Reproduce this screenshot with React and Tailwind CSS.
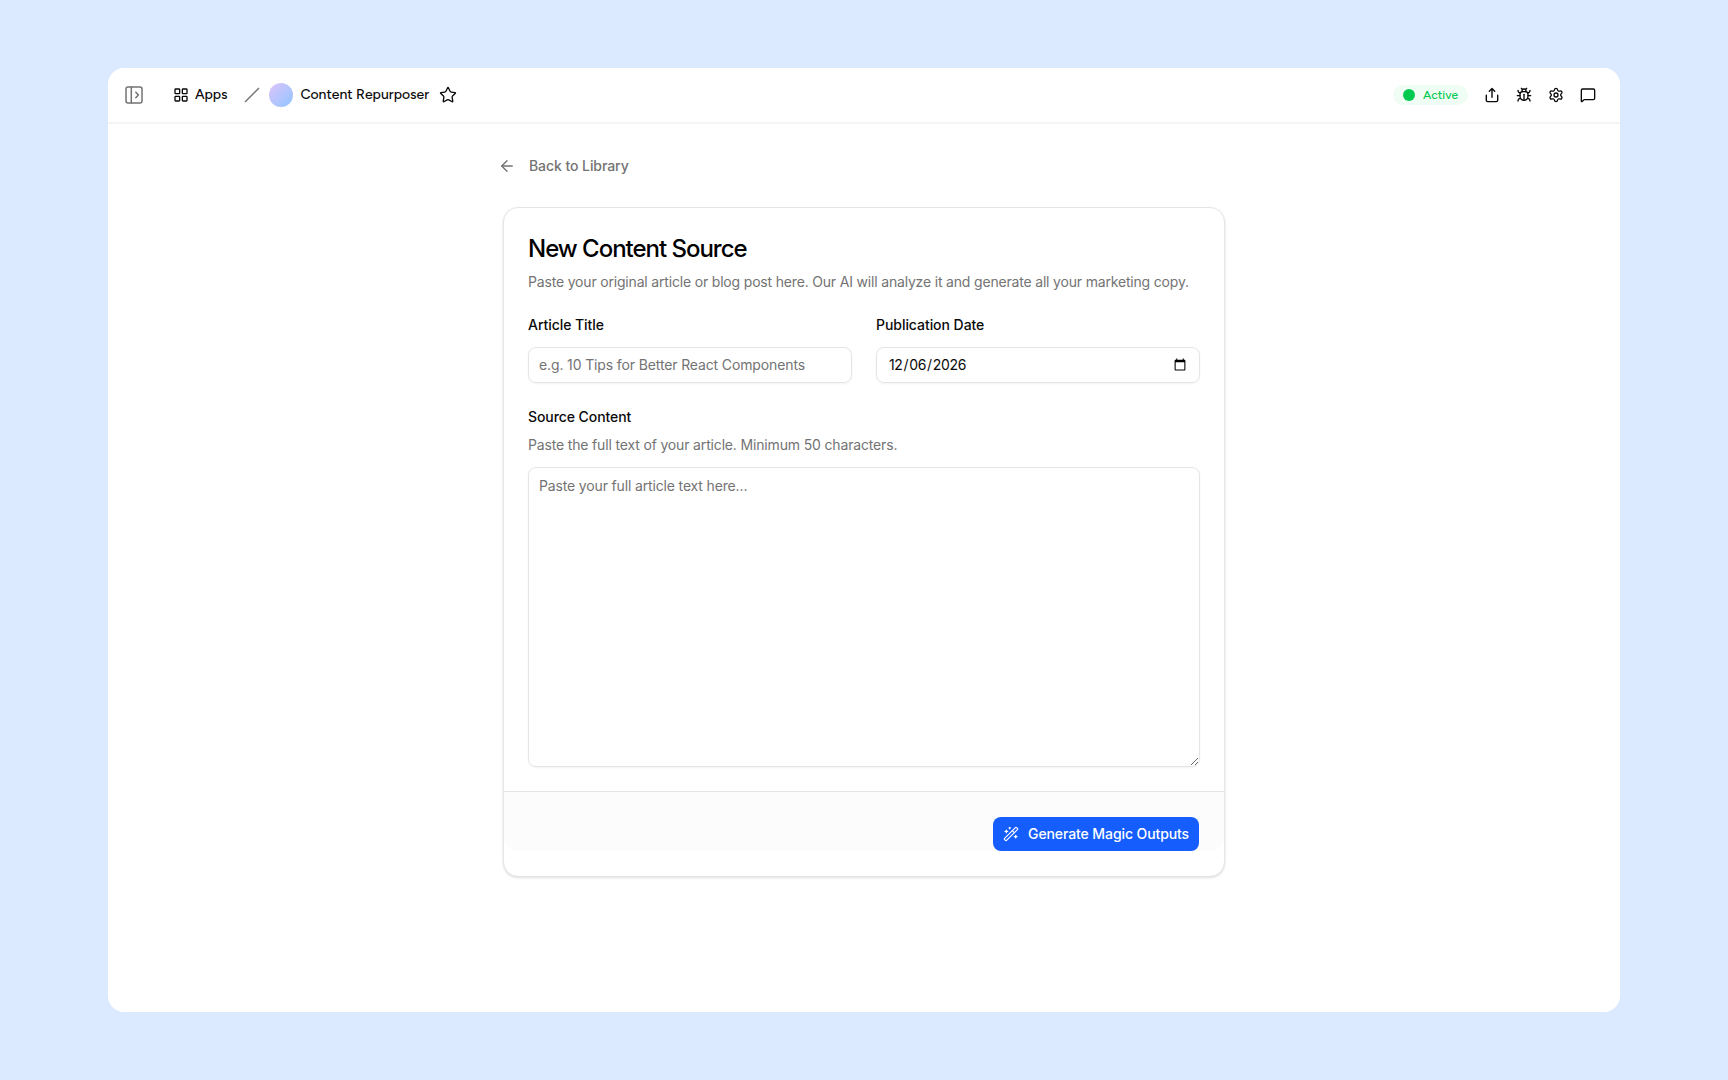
import React, { useState } from "react";
import {
  ArrowLeft,
  Bug,
  LayoutGrid,
  MessageSquare,
  Settings,
  Star,
  WandSparkles,
} from "lucide-react";

function ShareIcon() {
  return (
    <svg
      className="size-4"
      viewBox="0 0 16 16"
      fill="none"
      stroke="currentColor"
      strokeWidth="1.4"
      strokeLinecap="round"
      strokeLinejoin="round"
    >
      <path d="M8 10.3V1.5M5.3 4.2 8 1.5l2.7 2.7" />
      <path d="M2.3 8.3v5c0 .8.5 1.3 1.3 1.3h8.8c.8 0 1.3-.5 1.3-1.3v-5" />
    </svg>
  );
}

function PanelIcon() {
  return (
    <svg
      className="size-5"
      viewBox="0 0 20 20"
      fill="none"
      stroke="currentColor"
      strokeWidth="1.5"
      strokeLinecap="round"
      strokeLinejoin="round"
    >
      <rect x="2" y="2" width="16" height="16" rx="2" />
      <path d="M7.3 2v16M11.8 7.3l2.6 2.7-2.6 2.7" />
    </svg>
  );
}

function Header() {
  return (
    <header className="flex h-14 shrink-0 items-center border-b-2 border-[#f4f4f5] pl-4 pr-6 font-[Figtree,Inter,sans-serif] text-sm font-medium text-neutral-950">
      <button className="text-neutral-500">
        <PanelIcon />
      </button>
      <button className="ml-[29px] flex items-center gap-1.5">
        <LayoutGrid size={16} strokeWidth={2} />
        <span className="tracking-[-0.1px]">Apps</span>
      </button>
      <svg
        className="ml-[17px] size-4 text-neutral-500"
        viewBox="0 0 16 16"
        stroke="currentColor"
        strokeWidth="1.5"
      >
        <path d="M1 15 15 1" />
      </svg>
      <span className="ml-[9px] size-6 rounded-full bg-linear-to-br from-[#dcc3fb] to-[#8ec5ff]" />
      <span className="ml-[7px]">Content Repurposer</span>
      <Star size={18} strokeWidth={1.8} className="ml-2.5" />

      <div className="ml-auto flex items-center gap-4">
        <span className="flex h-5 items-center gap-2 rounded-full bg-[#f0fdf4] px-2.5 text-xs text-[#00c950]">
          <span className="size-3 rounded-full bg-[#00c950]" />
          Active
        </span>
        <ShareIcon />
        <Bug size={16} />
        <Settings size={16} />
        <MessageSquare size={16} />
      </div>
    </header>
  );
}

export default function App() {
  const [title, setTitle] = useState("");
  const [date, setDate] = useState("2026-12-06");
  const [content, setContent] = useState("");

  return (
    <div className="flex h-screen w-screen bg-[#dbeafe] px-[108px] py-[68px] font-[Inter,sans-serif] text-sm text-neutral-950">
      <div className="flex flex-1 flex-col overflow-hidden rounded-2xl bg-white">
        <Header />

        <main className="mx-auto w-[722px] pt-8">
          <button className="-ml-[5px] flex h-5 items-center gap-[13px] font-medium tracking-[-0.07px] text-neutral-500">
            <ArrowLeft size={18} strokeWidth={1.8} />
            Back to Library
          </button>

          <form
            onSubmit={(e) => e.preventDefault()}
            className="mt-[31px] rounded-[15px] border border-neutral-200 bg-white pb-[25px] shadow-sm"
          >
            <div className="px-6 pt-[25px]">
              <h1 className="text-2xl font-medium tracking-[-1.02px] text-black">
                New Content Source
              </h1>
              <p className="mt-[7px] whitespace-nowrap tracking-[-0.18px] text-neutral-500">
                Paste your original article or blog post here. Our AI will
                analyze it and generate all your marketing copy.
              </p>

              <div className="mt-[23px] grid grid-cols-2 gap-6">
                <label className="block font-medium tracking-[-0.05px]">
                  Article Title
                  <input
                    value={title}
                    onChange={(e) => setTitle(e.target.value)}
                    placeholder="e.g. 10 Tips for Better React Components"
                    className="mt-3 block h-9 w-full rounded-lg border border-neutral-200 px-2.5 pb-0.5 font-normal tracking-[-0.13px] shadow-xs outline-none placeholder:text-neutral-500"
                  />
                </label>
                <label className="block font-medium tracking-[-0.05px]">
                  Publication Date
                  <input
                    type="date"
                    value={date}
                    onChange={(e) => setDate(e.target.value)}
                    className="mt-3 block h-9 w-full rounded-lg border border-neutral-200 pl-[11px] pr-2.5 font-normal tracking-[-0.35px] shadow-xs outline-none"
                  />
                </label>
              </div>

              <label className="mt-6 block font-medium tracking-[-0.07px]">
                Source Content
                <p className="mt-2 font-normal tracking-[-0.16px] text-neutral-500">
                  Paste the full text of your article. Minimum 50 characters.
                </p>
                <textarea
                  value={content}
                  onChange={(e) => setContent(e.target.value)}
                  placeholder="Paste your full article text here..."
                  className="mt-3 block h-[300px] w-full rounded-lg border border-neutral-200 px-2.5 py-2 font-normal tracking-[-0.15px] shadow-xs outline-none placeholder:text-neutral-500"
                />
              </label>
            </div>

            <div className="mt-6 flex justify-end rounded-b-[15px] border-t border-neutral-200 bg-[#fcfcfc] pl-6 pr-[25px] pt-[25px]">
              <button className="flex h-[34px] items-center gap-[9px] rounded-lg bg-[#155dfc] px-2.5 font-medium tracking-[-0.1px] text-white">
                <WandSparkles size={16} strokeWidth={1.8} />
                Generate Magic Outputs
              </button>
            </div>
          </form>
        </main>
      </div>
    </div>
  );
}
